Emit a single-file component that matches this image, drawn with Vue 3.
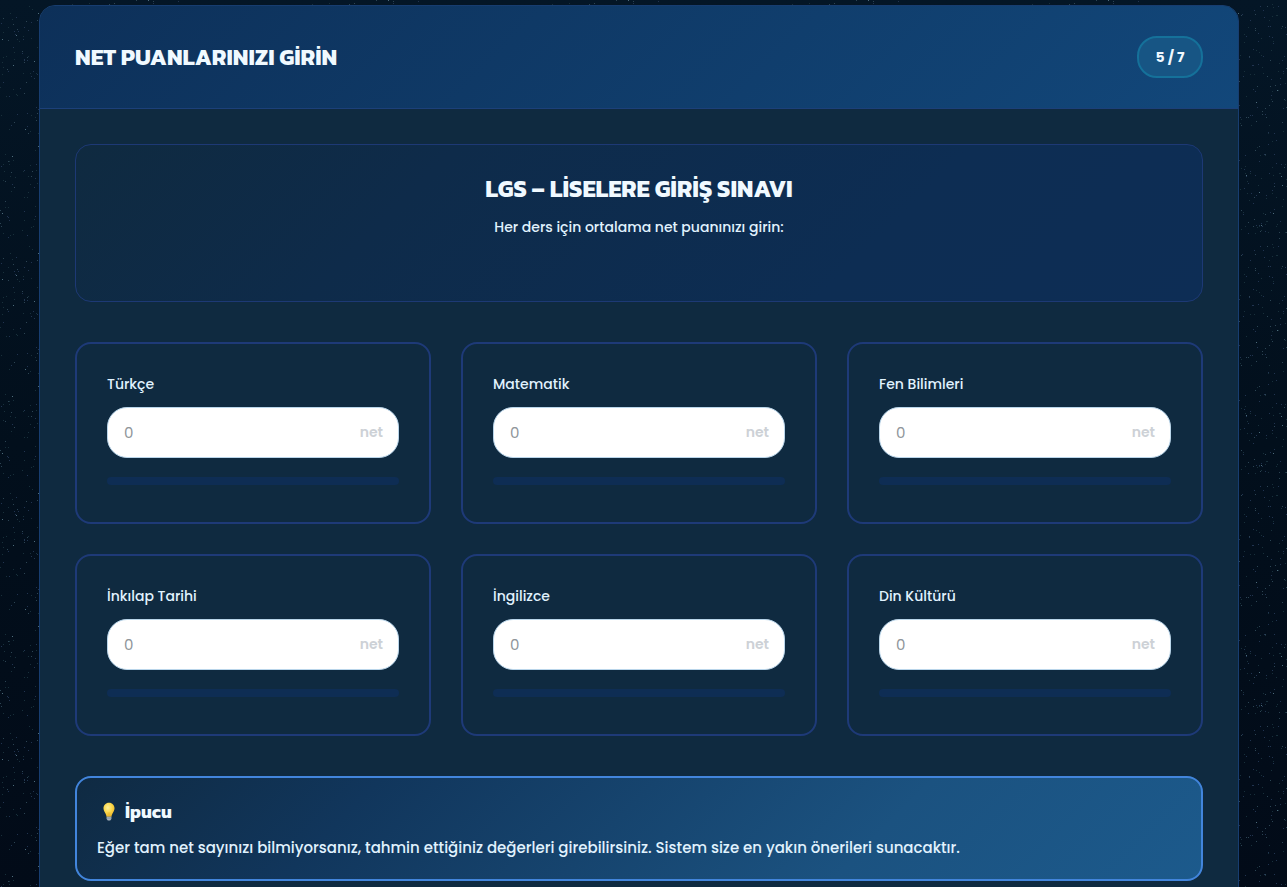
<script setup>
import { ref } from 'vue'

const subjects = ref([
  { id: 'turkce', label: 'Türkçe', net: '' },
  { id: 'matematik', label: 'Matematik', net: '' },
  { id: 'fen', label: 'Fen Bilimleri', net: '' },
  { id: 'inkilap', label: 'İnkılap Tarihi', net: '' },
  { id: 'ingilizce', label: 'İngilizce', net: '' },
  { id: 'din', label: 'Din Kültürü', net: '' },
])

// Seeded star field, repeated as a tile behind the page
let seed = 4711
function random() {
  seed = (seed * 16807) % 2147483647
  return seed / 2147483647
}
const tile = 240
const colours = ['#2c4453', '#213450', '#18303b', '#4d6c7c']
const layers = colours.map((colour, i) => {
  let d = ''
  const count = [200, 300, 420, 50][i]
  for (let n = 0; n < count; n++) {
    d += `M${Math.floor(random() * tile)} ${Math.floor(random() * tile)}h1v1h-1z`
  }
  return { colour, d }
})
</script>

<template>
  <div class="page">
    <svg class="stars" aria-hidden="true">
      <defs>
        <pattern id="star-tile" :width="tile" :height="tile" patternUnits="userSpaceOnUse">
          <path v-for="l in layers" :key="l.colour" :d="l.d" :fill="l.colour" />
        </pattern>
      </defs>
      <rect width="100%" height="100%" fill="url(#star-tile)" />
    </svg>

    <main class="panel">
      <header class="panel-head">
        <h1>NET PUANLARINIZI GİRİN</h1>
        <span class="step">5 / 7</span>
      </header>

      <div class="panel-body">
        <section class="intro">
          <h2>LGS – LİSELERE GİRİŞ SINAVI</h2>
          <p>Her ders için ortalama net puanınızı girin:</p>
        </section>

        <form class="grid" @submit.prevent>
          <div v-for="s in subjects" :key="s.id" class="card">
            <label :for="s.id">{{ s.label }}</label>
            <div class="field">
              <input :id="s.id" v-model="s.net" type="text" inputmode="decimal" placeholder="0" />
              <span class="unit">net</span>
            </div>
            <div class="track"></div>
          </div>
        </form>

        <aside class="tip">
          <h3>
            <svg class="bulb" viewBox="0 0 24 24" aria-hidden="true">
              <defs>
                <radialGradient id="bulb-glass" cx="40%" cy="35%" r="65%">
                  <stop offset="0" stop-color="#fff09a" />
                  <stop offset="0.55" stop-color="#fbd84b" />
                  <stop offset="1" stop-color="#eeb92b" />
                </radialGradient>
              </defs>
              <path d="M12 1C7.800 1 5 4.200 5 8c0 3 1.700 4.700 2.700 6.700.6 1.100.9 2 1.100 3.800h6.400c.2-1.800.5-2.700 1.100-3.800C17.300 12.700 19 11 19 8c0-3.800-2.800-7-7-7z" fill="url(#bulb-glass)" />
              <path d="M11 13v5M13 13v5" fill="none" stroke="#e0a829" stroke-width="0.600" />
              <path d="M9 18.500h6v3l-1.500 2h-3L9 21.500z" fill="#a8b4bd" />
              <path d="M9 20.300h6" stroke="#74838e" stroke-width="0.800" />
            </svg>
            İpucu
          </h3>
          <p>Eğer tam net sayınızı bilmiyorsanız, tahmin ettiğiniz değerleri girebilirsiniz. Sistem size en yakın önerileri sunacaktır.</p>
        </aside>
      </div>
    </main>
  </div>
</template>

<style>
body {
  margin: 0;
  background: #020f1c;
}
</style>

<style scoped>
* {
  box-sizing: border-box;
}
h1,
h2,
h3,
p {
  margin: 0;
}
.page {
  position: relative;
  height: 100vh;
  padding: 5px 48px 40px 39px;
  overflow-y: auto;
  scrollbar-width: none;
  background: linear-gradient(180deg, #041626 0%, #020f1c 50%, #020b18 100%);
  color: #e0f2fe;
  font-family: Poppins, Inter, sans-serif;
}
.stars {
  position: absolute;
  inset: 0;
  width: 100%;
  height: 100%;
}
.panel {
  position: relative;
  max-width: 1200px;
  margin: 0 auto;
  border: 1px solid #173d70;
  border-radius: 16px;
  background: #0f2a40;
  overflow: hidden;
}
.panel-head {
  display: flex;
  align-items: center;
  justify-content: space-between;
  padding: 30px 35px;
  border-bottom: 1px solid #1c4079;
  background: linear-gradient(135deg, #0d3059 0%, #12477a 100%);
}
h1,
h2,
h3 {
  font-family: Kanit, Roboto, sans-serif;
  font-weight: 700;
  color: #f0f9ff;
}
h1 {
  font-size: 23px;
  line-height: 38px;
}
.step {
  min-width: 66px;
  padding: 8px 16px;
  border: 2px solid #15719a;
  border-radius: 20px;
  background: #175584;
  color: #f0f9ff;
  font-size: 14px;
  font-weight: 700;
  line-height: 22px;
  text-align: center;
}
.panel-body {
  padding: 35px;
}
.intro {
  min-height: 158px;
  padding: 26px;
  border: 1px solid #1d3975;
  border-radius: 16px;
  background: linear-gradient(135deg, #0f2a40 0%, #0e2b4a 30%, #0d2d53 70%, #0d2d55 100%);
  text-align: center;
}
h2 {
  font-size: 24px;
  line-height: 36px;
}
.intro p {
  margin-top: 8px;
  font-size: 14px;
  font-weight: 500;
  line-height: 24px;
}
.grid {
  display: grid;
  grid-template-columns: repeat(3, 1fr);
  gap: 30px;
  margin: 40px 0;
}
.card {
  min-height: 182px;
  padding: 30px;
  border: 2px solid #1e3a78;
  border-radius: 16px;
}
.card label {
  display: block;
  margin-bottom: 12px;
  font-size: 14px;
  font-weight: 500;
  line-height: 21px;
}
.field {
  position: relative;
}
.field input {
  display: block;
  width: 100%;
  height: 51px;
  padding: 0 60px 0 16px;
  border: 1px solid #b9d5ea;
  border-radius: 20px;
  background: #fff;
  color: #10243a;
  font-family: inherit;
  font-size: 15px;
  outline: none;
}
.field input::placeholder {
  color: #8f959a;
  opacity: 1;
}
.unit {
  position: absolute;
  top: 0;
  right: 16px;
  color: #cdd1d6;
  font-size: 14px;
  font-weight: 600;
  line-height: 51px;
  pointer-events: none;
}
.track {
  height: 8px;
  margin-top: 19px;
  border-radius: 4px;
  background: #0e2d54;
}
.tip {
  padding: 18px 20px;
  border: 2px solid #4285dc;
  border-radius: 16px;
  background: linear-gradient(135deg, #0f2a42 0%, #11365c 25%, #1b5280 70%, #1c5a8c 100%);
}
h3 {
  display: flex;
  align-items: center;
  gap: 6px;
  padding-left: 2px;
  font-size: 18px;
  line-height: 31px;
}
.bulb {
  width: 20px;
  height: 19px;
}
.tip p {
  margin-top: 8px;
  font-size: 15px;
  font-weight: 500;
  line-height: 26px;
}
</style>
